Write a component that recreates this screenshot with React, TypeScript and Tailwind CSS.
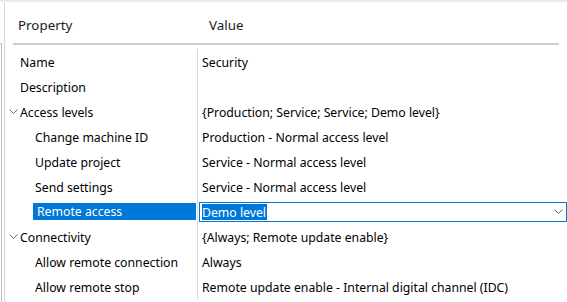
import React from "react";

type Row = { label: string; value: string; level: 0 | 1; expander?: boolean; selected?: boolean };

const rows: Row[] = [
  { label: "Name", value: "Security", level: 0 },
  { label: "Description", value: "", level: 0 },
  { label: "Access levels", value: "{Production; Service; Service; Demo level}", level: 0, expander: true },
  { label: "Change machine ID", value: "Production - Normal access level", level: 1 },
  { label: "Update project", value: "Service - Normal access level", level: 1 },
  { label: "Send settings", value: "Service - Normal access level", level: 1 },
  { label: "Remote access", value: "Demo level", level: 1, selected: true },
  { label: "Connectivity", value: "{Always; Remote update enable}", level: 0, expander: true },
  { label: "Allow remote connection", value: "Always", level: 1 },
  { label: "Allow remote stop", value: "Remote update enable - Internal digital channel (IDC)", level: 1 },
];

function Chevron({ className }: { className?: string }) {
  return (
    <svg width="9" height="6" viewBox="0 0 9 6" className={className}>
      <path d="M0.5 0.5 L4.5 4.5 L8.5 0.5" fill="none" stroke="#6b6b6b" strokeWidth="1" />
    </svg>
  );
}

export default function App() {
  return (
    <div
      className="w-[567px] h-[302px] bg-white overflow-hidden flex flex-col text-[12.25px] text-black"
      style={{ fontFamily: '"Noto Sans", "Open Sans", sans-serif' }}
    >
      <div className="h-[3px] shrink-0 bg-gradient-to-b from-[#e3e3e3] to-white" />
      <div className="flex flex-1 min-h-0">
        {/* left gutter lines */}
        <div className="w-[5px] shrink-0 border-r border-[#d4d4d4] flex flex-col">
          <div className="h-[40px] shrink-0" />
          <div className="w-[2px] flex-1 border-t border-r border-[#bdbdbd]" />
        </div>
        <div className="flex-1 flex flex-col min-w-0">
          {/* header */}
          <div className="h-[40px] shrink-0 flex items-center text-[13.4px] text-[#1b1b1b]">
            <div className="w-[192px] pl-[13px] pt-[4px]">Property</div>
            <div className="pl-[12px] pt-[4px]">Value</div>
          </div>
          <div className="h-[2px] shrink-0 ml-[8px] mr-[8px] bg-[#cccccc]" />
          <div className="h-[4px] shrink-0" />
          {rows.map((r) => (
            <div key={r.label} className="h-[25px] flex shrink-0">
              <div className="w-[193px] shrink-0 flex items-center border-r border-[#d9d9d9]">
                <div className={r.level === 0 ? "w-[15px] shrink-0 flex justify-end pr-[2px] pt-[1px]" : "w-[28px] shrink-0"}>
                  {r.expander ? <Chevron /> : null}
                </div>
                {r.selected ? (
                  <div className="flex-1 h-[17px] bg-[#0078d7] text-white flex items-center pl-[4px] pt-[2px] mr-[1px] whitespace-nowrap">
                    {r.label}
                  </div>
                ) : (
                  <div className={r.level === 0 ? "whitespace-nowrap pt-[3px]" : "pl-[2px] pt-[3px] whitespace-nowrap"}>{r.label}</div>
                )}
              </div>
              {r.selected ? (
                <div className="flex-1 flex items-center pl-[1px]">
                  <div className="flex-1 h-[20px] border border-[#0078d7] flex items-center pl-[2px] pr-[3px]">
                    <span className="bg-[#0078d7] text-white leading-[15px] pt-[1px] pr-[1px]">{r.value}</span>
                    <div className="flex-1" />
                    <Chevron />
                  </div>
                </div>
              ) : (
                <div className="flex-1 flex items-center pl-[4px] pt-[3px] whitespace-nowrap">{r.value}</div>
              )}
            </div>
          ))}
        </div>
      </div>
    </div>
  );
}
